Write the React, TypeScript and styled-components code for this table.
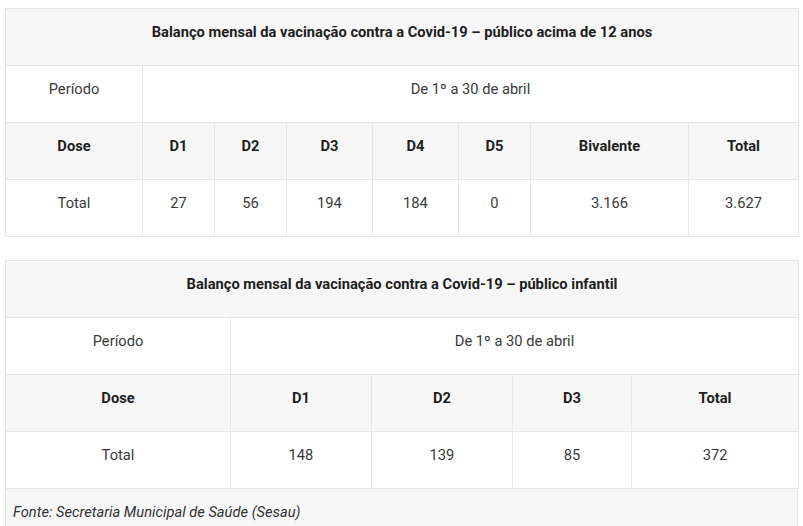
import styled, { createGlobalStyle } from 'styled-components';

const GlobalStyle = createGlobalStyle`
  html, body {
    margin: 0;
    padding: 0;
    background: #ffffff;
  }
  body {
    font-family: Roboto, "Liberation Sans", Arial, sans-serif;
    color: #333;
  }
`;

const Page = styled.div`
  width: 793px;
  padding: 8px 0 0 5px;
  display: flex;
  flex-direction: column;
  gap: 23px;
`;

const Figure = styled.figure`
  margin: 0;
  display: flex;
  flex-direction: column;
`;

const Table = styled.table`
  width: 793px;
  border-collapse: collapse;
  table-layout: fixed;
  font-size: 14.7px;
`;

const Row = styled.tr<{ $shade?: boolean }>`
  height: 57px;
  background: ${p => (p.$shade ? '#f7f7f7' : '#ffffff')};
`;

const Cell = styled.td<{ $bold?: boolean }>`
  border: 1px solid #e6e6e6;
  text-align: center;
  vertical-align: middle;
  padding: 0 6px 10px;
  font-weight: ${p => (p.$bold ? 700 : 400)};
  color: ${p => (p.$bold ? '#1e1e1e' : '#3a3a3a')};
`;

const Caption = styled.figcaption`
  height: 38px;
  background: #f7f7f7;
  border: 1px solid #e6e6e6;
  border-top: none;
  display: flex;
  align-items: center;
  padding: 4px 0 0 7px;
  font-style: italic;
  font-size: 14.7px;
  color: #333;
`;

type TableData = {
  title: string;
  widths: number[];
  heads: string[];
  values: string[];
};

const tables: TableData[] = [
  {
    title: 'Balanço mensal da vacinação contra a Covid-19 – público acima de 12 anos',
    widths: [137, 72, 72, 86, 86, 72, 158, 110],
    heads: ['D1', 'D2', 'D3', 'D4', 'D5', 'Bivalente', 'Total'],
    values: ['27', '56', '194', '184', '0', '3.166', '3.627'],
  },
  {
    title: 'Balanço mensal da vacinação contra a Covid-19 – público infantil',
    widths: [225, 141, 141, 119, 167],
    heads: ['D1', 'D2', 'D3', 'Total'],
    values: ['148', '139', '85', '372'],
  },
];

function Balance({ data }: { data: TableData }) {
  const span = data.widths.length;
  return (
    <Table>
      <colgroup>
        {data.widths.map((w, i) => (
          <col key={i} style={{ width: w }} />
        ))}
      </colgroup>
      <tbody>
        <Row $shade>
          <Cell $bold colSpan={span}>{data.title}</Cell>
        </Row>
        <Row>
          <Cell>Período</Cell>
          <Cell colSpan={span - 1}>De 1º a 30 de abril</Cell>
        </Row>
        <Row $shade>
          <Cell $bold>Dose</Cell>
          {data.heads.map(h => (
            <Cell $bold key={h}>{h}</Cell>
          ))}
        </Row>
        <Row>
          <Cell>Total</Cell>
          {data.values.map((v, i) => (
            <Cell key={i}>{v}</Cell>
          ))}
        </Row>
      </tbody>
    </Table>
  );
}

export default function App() {
  return (
    <>
      <GlobalStyle />
      <Page>
        <Balance data={tables[0]} />
        <Figure>
          <Balance data={tables[1]} />
          <Caption>Fonte: Secretaria Municipal de Saúde (Sesau)</Caption>
        </Figure>
      </Page>
    </>
  );
}
